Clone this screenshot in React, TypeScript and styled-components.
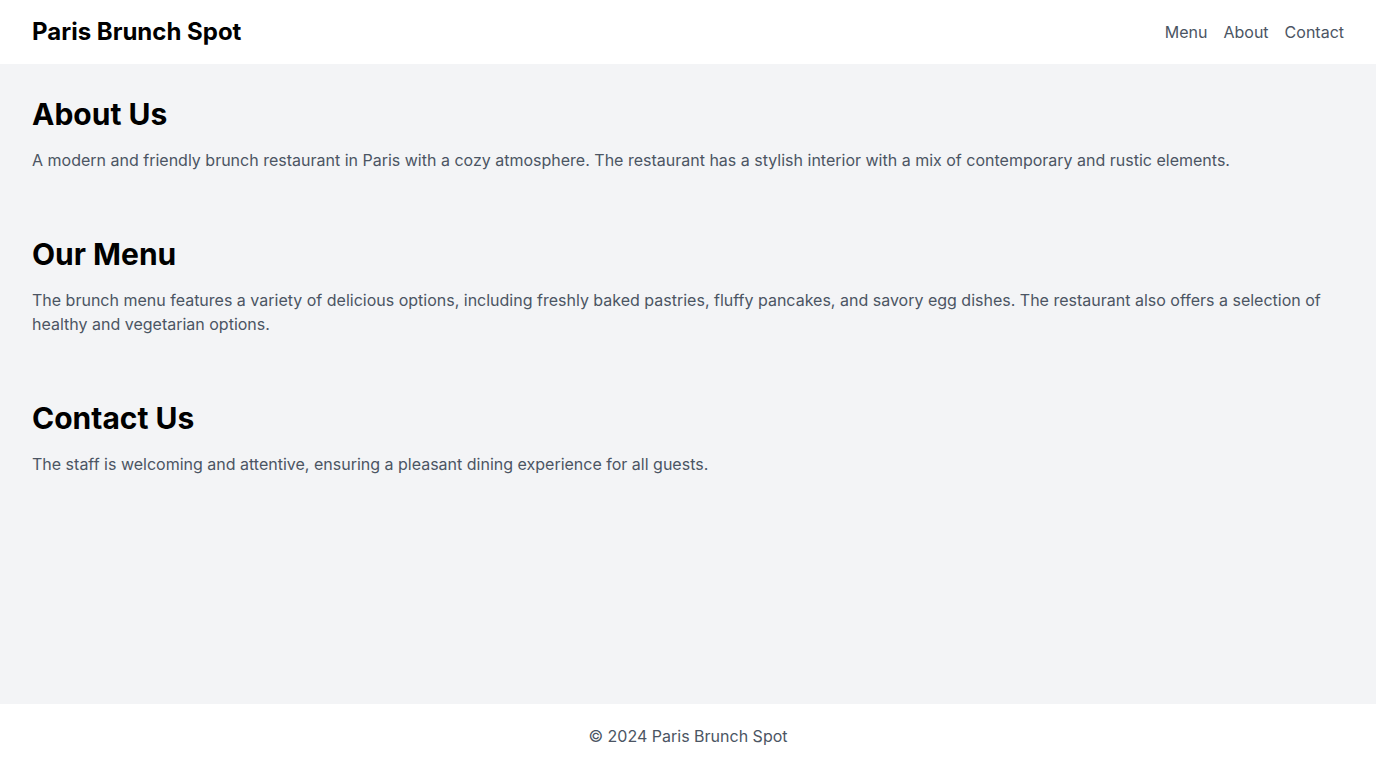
import React from "react";
import styled, { createGlobalStyle } from "styled-components";

const Global = createGlobalStyle`
  * { box-sizing: border-box; }
  html, body { margin: 0; padding: 0; }
  body { font-family: Inter, "Noto Sans", sans-serif; background: #f3f4f6; }
`;

const Page = styled.div`
  min-height: 100vh;
  display: flex;
  flex-direction: column;
  background: #f3f4f6;
`;

const Header = styled.header`
  height: 64px;
  background: #ffffff;
  display: flex;
  align-items: center;
  justify-content: space-between;
  padding: 0 32px;
`;

const Brand = styled.h1`
  margin: 0;
  font-size: 24px;
  line-height: 32px;
  font-weight: 700;
  color: #000000;
`;

const Nav = styled.nav`
  display: flex;
  gap: 16px;
`;

const NavLink = styled.a`
  font-size: 16px;
  line-height: 24px;
  color: #4b5563;
  text-decoration: none;
`;

const Main = styled.main`
  flex: 1;
  padding: 32px;
`;

const Section = styled.section`
  margin-bottom: 64px;
`;

const Heading = styled.h2`
  margin: 0 0 16px;
  font-size: 30px;
  line-height: 36px;
  font-weight: 700;
  color: #000000;
`;

const Text = styled.p`
  margin: 0;
  font-size: 16px;
  line-height: 24px;
  color: #4b5563;
`;

const Footer = styled.footer`
  height: 64px;
  background: #ffffff;
  display: flex;
  align-items: center;
  justify-content: center;
  font-size: 16px;
  line-height: 24px;
  color: #4b5563;
`;

export default function App() {
  return (
    <Page>
      <Global />
      <Header>
        <Brand>Paris Brunch Spot</Brand>
        <Nav>
          <NavLink href="#menu">Menu</NavLink>
          <NavLink href="#about">About</NavLink>
          <NavLink href="#contact">Contact</NavLink>
        </Nav>
      </Header>
      <Main>
        <Section id="about">
          <Heading>About Us</Heading>
          <Text>
            A modern and friendly brunch restaurant in Paris with a cozy atmosphere. The restaurant has a stylish interior with a mix of contemporary and rustic elements.
          </Text>
        </Section>
        <Section id="menu">
          <Heading>Our Menu</Heading>
          <Text>
            The brunch menu features a variety of delicious options, including freshly baked pastries, fluffy pancakes, and savory egg dishes. The restaurant also offers a selection of healthy and vegetarian options.
          </Text>
        </Section>
        <Section id="contact">
          <Heading>Contact Us</Heading>
          <Text>
            The staff is welcoming and attentive, ensuring a pleasant dining experience for all guests.
          </Text>
        </Section>
      </Main>
      <Footer>© 2024 Paris Brunch Spot</Footer>
    </Page>
  );
}
